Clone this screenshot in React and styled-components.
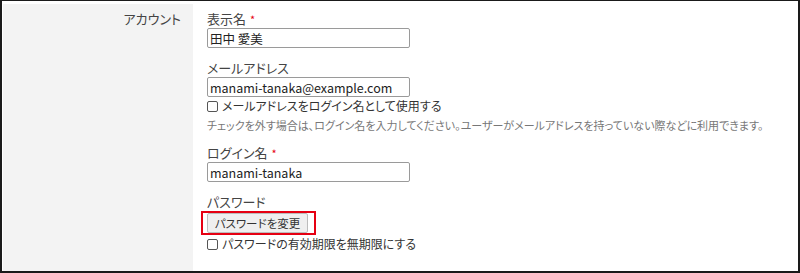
import React from "react";
import styled, { createGlobalStyle } from "styled-components";

const GlobalStyle = createGlobalStyle`
    html, body {
        margin: 0;
        padding: 0;
        background: #fff;
    }
    body {
        font-family: "Noto Sans CJK JP", "Noto Sans", sans-serif;
        font-feature-settings: "palt";
        color: #333;
    }
`;

function Field({ label, required, children }) {
    return (
        <FieldBlock>
            <Label>
                {label}
                {required && <Required>*</Required>}
            </Label>
            {children}
        </FieldBlock>
    );
}

function Check({ children }) {
    return (
        <CheckRow>
            <CheckBox type="checkbox" />
            <span>{children}</span>
        </CheckRow>
    );
}

function App() {
    return (
        <Frame>
            <GlobalStyle />
            <Row>
                <HeadCell>アカウント</HeadCell>
                <BodyCell>
                    <Field label="表示名" required>
                        <TextInput defaultValue="田中 愛美" />
                    </Field>
                    <Field label="メールアドレス">
                        <TextInput defaultValue="manami-tanaka@example.com" />
                        <Check>メールアドレスをログイン名として使用する</Check>
                        <Help>
                            チェックを外す場合は、ログイン名を入力してください。ユーザーがメールアドレスを持っていない際などに利用できます。
                        </Help>
                    </Field>
                    <Field label="ログイン名" required>
                        <TextInput defaultValue="manami-tanaka" />
                    </Field>
                    <Field label="パスワード">
                        {/* red frame is the highlight drawn in the manual */}
                        <Highlight>
                            <Button type="button">パスワードを変更</Button>
                        </Highlight>
                        <Check>パスワードの有効期限を無期限にする</Check>
                    </Field>
                </BodyCell>
            </Row>
        </Frame>
    );
}

export default App;

const Frame = styled.div`
    box-sizing: border-box;
    width: 800px;
    height: 273px;
    border-top: 1px solid #1a1a1a;
    border-left: 2px solid #1a1a1a;
    border-right: 2px solid #1a1a1a;
    border-bottom: 2px solid #1a1a1a;
    padding: 3px 0 0 1px;
    display: flex;
    overflow: hidden;
`;

const Row = styled.div`
    display: flex;
    flex: 1;
`;

const HeadCell = styled.div`
    width: 190px;
    background: #f3f3f3;
    box-sizing: border-box;
    padding: 6px 12px 0 0;
    text-align: right;
    font-size: 13px;
    line-height: 18px;
    color: #444;
`;

const BodyCell = styled.div`
    flex: 1;
    padding: 6px 0 0 14px;
    display: flex;
    flex-direction: column;
`;

const FieldBlock = styled.div`
    display: flex;
    flex-direction: column;
    align-items: flex-start;
    margin-bottom: 11px;
`;

const Label = styled.div`
    font-size: 13px;
    line-height: 18px;
    color: #444;
`;

const Required = styled.span`
    color: #e60012;
    font-size: 11px;
    margin-left: 4px;
    vertical-align: top;
`;

const TextInput = styled.input`
    box-sizing: border-box;
    width: 203px;
    height: 20px;
    margin: 0;
    padding: 0 2px;
    border: 1px solid #9a9a9a;
    border-radius: 2px;
    font-family: "Noto Sans CJK JP", "Noto Sans", sans-serif;
    font-feature-settings: "palt";
    font-size: 12.5px;
    color: #222;
    background: #fff;
    outline: none;
`;

const CheckRow = styled.label`
    display: flex;
    align-items: center;
    height: 17px;
    font-size: 12px;
    color: #333;
`;

const CheckBox = styled.input`
    appearance: none;
    box-sizing: border-box;
    width: 11px;
    height: 11px;
    margin: 1px 4px 0 0;
    border: 1px solid #555;
    border-radius: 2px;
    background: #fff;
`;

const Help = styled.div`
    margin-top: 3px;
    font-size: 11px;
    line-height: 16px;
    color: #777;
`;

const Highlight = styled.div`
    display: inline-flex;
    margin-left: -6px;
    border: 2px solid #e60012;
    padding: 0 6px 0 4px;
`;

const Button = styled.button`
    box-sizing: border-box;
    width: 101px;
    height: 20px;
    margin: 0;
    padding: 0;
    border: 1px solid #bcbcbc;
    border-radius: 2px;
    background: #efefef;
    font-family: "Noto Sans CJK JP", "Noto Sans", sans-serif;
    font-feature-settings: "palt";
    font-size: 11.5px;
    white-space: nowrap;
    color: #333;
`;
